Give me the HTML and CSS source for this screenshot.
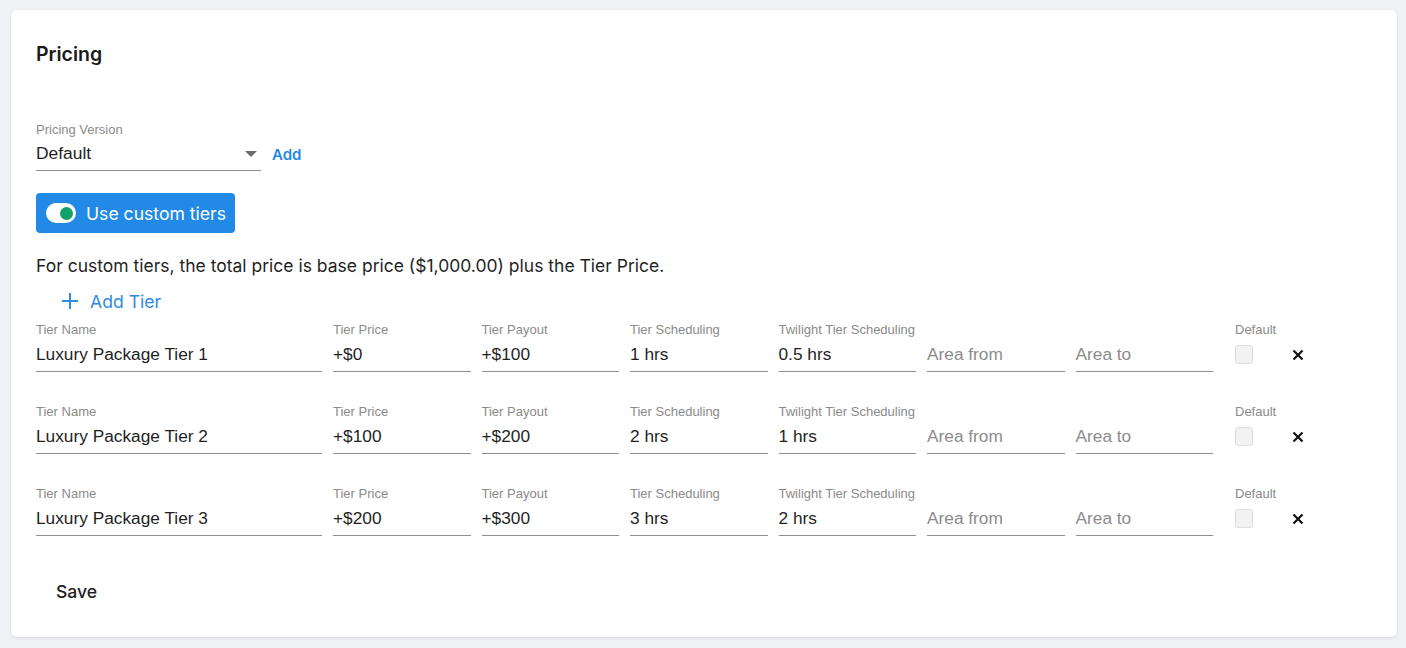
FILE: index.html
```html
<!DOCTYPE html>
<html lang="en">
<head>
<meta charset="utf-8">
<title>Pricing</title>
<link rel="stylesheet" href="styles.css">
</head>
<body>
<div class="card">
  <h2 class="title">Pricing</h2>

  <div class="version">
    <div class="field-label">Pricing Version</div>
    <div class="version-row">
      <div class="select">
        <span class="select-value">Default</span>
        <span class="caret"></span>
      </div>
      <a class="add-link" href="#">Add</a>
    </div>
  </div>

  <button class="toggle-btn" type="button">
    <span class="switch"><span class="knob"></span></span>
    <span>Use custom tiers</span>
  </button>

  <p class="note">For custom tiers, the total price is base price ($1,000.00) plus the Tier Price.</p>

  <button class="add-tier" type="button">
    <svg width="18" height="18" viewBox="0 0 18 18" aria-hidden="true"><path d="M9 1v16M1 9h16" stroke="currentColor" stroke-width="2" fill="none"/></svg>
    <span>Add Tier</span>
  </button>

  <div class="tiers">
    <div class="tier">
      <div class="field"><div class="field-label">Tier Name</div><div class="input">Luxury Package Tier 1</div></div>
      <div class="field"><div class="field-label">Tier Price</div><div class="input">+$0</div></div>
      <div class="field"><div class="field-label">Tier Payout</div><div class="input">+$100</div></div>
      <div class="field"><div class="field-label">Tier Scheduling</div><div class="input">1 hrs</div></div>
      <div class="field"><div class="field-label">Twilight Tier Scheduling</div><div class="input">0.5 hrs</div></div>
      <div class="field"><div class="field-label">&nbsp;</div><div class="input placeholder">Area from</div></div>
      <div class="field"><div class="field-label">&nbsp;</div><div class="input placeholder">Area to</div></div>
      <div class="field check-field"><div class="field-label">Default</div><div class="check-wrap"><span class="checkbox"></span></div></div>
      <div class="remove"><svg width="12" height="12" viewBox="0 0 12 12" aria-hidden="true"><path d="M1.5 1.5l9 9M10.5 1.5l-9 9" stroke="#111" stroke-width="2.2" fill="none"/></svg></div>
    </div>
    <div class="tier">
      <div class="field"><div class="field-label">Tier Name</div><div class="input">Luxury Package Tier 2</div></div>
      <div class="field"><div class="field-label">Tier Price</div><div class="input">+$100</div></div>
      <div class="field"><div class="field-label">Tier Payout</div><div class="input">+$200</div></div>
      <div class="field"><div class="field-label">Tier Scheduling</div><div class="input">2 hrs</div></div>
      <div class="field"><div class="field-label">Twilight Tier Scheduling</div><div class="input">1 hrs</div></div>
      <div class="field"><div class="field-label">&nbsp;</div><div class="input placeholder">Area from</div></div>
      <div class="field"><div class="field-label">&nbsp;</div><div class="input placeholder">Area to</div></div>
      <div class="field check-field"><div class="field-label">Default</div><div class="check-wrap"><span class="checkbox"></span></div></div>
      <div class="remove"><svg width="12" height="12" viewBox="0 0 12 12" aria-hidden="true"><path d="M1.5 1.5l9 9M10.5 1.5l-9 9" stroke="#111" stroke-width="2.2" fill="none"/></svg></div>
    </div>
    <div class="tier">
      <div class="field"><div class="field-label">Tier Name</div><div class="input">Luxury Package Tier 3</div></div>
      <div class="field"><div class="field-label">Tier Price</div><div class="input">+$200</div></div>
      <div class="field"><div class="field-label">Tier Payout</div><div class="input">+$300</div></div>
      <div class="field"><div class="field-label">Tier Scheduling</div><div class="input">3 hrs</div></div>
      <div class="field"><div class="field-label">Twilight Tier Scheduling</div><div class="input">2 hrs</div></div>
      <div class="field"><div class="field-label">&nbsp;</div><div class="input placeholder">Area from</div></div>
      <div class="field"><div class="field-label">&nbsp;</div><div class="input placeholder">Area to</div></div>
      <div class="field check-field"><div class="field-label">Default</div><div class="check-wrap"><span class="checkbox"></span></div></div>
      <div class="remove"><svg width="12" height="12" viewBox="0 0 12 12" aria-hidden="true"><path d="M1.5 1.5l9 9M10.5 1.5l-9 9" stroke="#111" stroke-width="2.2" fill="none"/></svg></div>
    </div>
  </div>

  <button class="save" type="button">Save</button>
</div>
</body>
</html>
```

FILE: styles.css
```css
* { box-sizing: border-box; }

html, body {
  margin: 0;
  height: 100%;
}

body {
  background: #f0f1f5;
  padding: 10px 9px 0 11px;
  font-family: Inter, "Liberation Sans", Arial, sans-serif;
  color: #1f1f1f;
}

.card {
  background: #ffffff;
  border-radius: 6px;
  box-shadow: 0 1px 3px rgba(40, 45, 70, 0.12);
  height: 627px;
  padding: 32px 25px 0 25px;
  display: flex;
  flex-direction: column;
  align-items: flex-start;
}

.title {
  margin: 0;
  font-size: 19.5px;
  line-height: 24px;
  font-weight: 600;
  color: #1a1a1a;
}

.version {
  margin-top: 56px;
}

.field-label {
  font-family: "Liberation Sans", Arial, sans-serif;
  font-size: 13px;
  line-height: 15px;
  color: #8a8a8a;
  white-space: nowrap;
}

.version-row {
  display: flex;
  align-items: center;
  gap: 11px;
}

.select {
  width: 225px;
  height: 34px;
  border-bottom: 1px solid #8f8f8f;
  display: flex;
  align-items: center;
  justify-content: space-between;
  padding-right: 4px;
}

.select-value {
  font-family: "Liberation Sans", Arial, sans-serif;
  font-size: 17.4px;
  color: #1f1f1f;
}

.caret {
  width: 0;
  height: 0;
  border-left: 6px solid transparent;
  border-right: 6px solid transparent;
  border-top: 6px solid #6b6b6b;
}

.add-link {
  font-size: 15px;
  font-weight: 600;
  color: #1e88e5;
  text-decoration: none;
}

.toggle-btn {
  margin-top: 22px;
  height: 40px;
  padding: 0 9px 0 10px;
  border: none;
  border-radius: 4px;
  background: #228ae6;
  color: #ffffff;
  font-family: Inter, "Liberation Sans", Arial, sans-serif;
  font-size: 17.6px;
  white-space: nowrap;
  display: flex;
  align-items: center;
  gap: 10px;
}

.switch {
  flex-shrink: 0;
  width: 30px;
  height: 20px;
  border-radius: 10px;
  background: #ffffff;
  display: flex;
  align-items: center;
  justify-content: flex-end;
  padding-right: 3px;
}

.knob {
  width: 13px;
  height: 13px;
  border-radius: 50%;
  background: #13a06b;
}

.note {
  margin: 22px 0 0 0;
  font-size: 17.5px;
  line-height: 22px;
  color: #1f1f1f;
}

.add-tier {
  margin-top: 13px;
  margin-left: 25px;
  padding: 0;
  border: none;
  background: none;
  display: flex;
  align-items: center;
  gap: 11px;
  color: #2f8ae4;
  font-family: Inter, "Liberation Sans", Arial, sans-serif;
  font-size: 17.6px;
  height: 22px;
}

.tiers {
  margin-top: 10px;
  display: flex;
  flex-direction: column;
  gap: 32px;
}

.tier {
  display: grid;
  grid-template-columns: 286px repeat(6, 137.5px) 45px 32px;
  column-gap: 11px;
  align-items: start;
}

.check-field {
  margin-left: 11px;
}

.remove {
  height: 50px;
  padding-top: 15px;
  padding-left: 12px;
  display: flex;
  align-items: center;
}

.remove svg {
  flex-shrink: 0;
}

.input {
  height: 35px;
  border-bottom: 1px solid #8f8f8f;
  font-family: "Liberation Sans", Arial, sans-serif;
  font-size: 17.3px;
  line-height: 34px;
  color: #1f1f1f;
  white-space: nowrap;
}

.input.placeholder {
  color: #8c8c8c;
}

.check-wrap {
  height: 35px;
  display: flex;
  align-items: center;
}

.checkbox {
  width: 18px;
  height: 19px;
  border: 1px solid #dedede;
  border-radius: 3px;
  background: #f2f2f2;
}

.save {
  margin-top: 37px;
  padding: 0 20px;
  height: 36px;
  border: none;
  background: none;
  font-family: Inter, "Liberation Sans", Arial, sans-serif;
  font-size: 17.6px;
  font-weight: 500;
  color: #1f1f1f;
}
```
